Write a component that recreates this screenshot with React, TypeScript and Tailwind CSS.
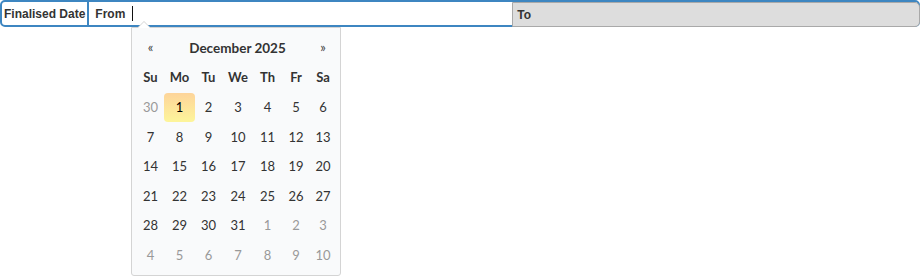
const weeks: { d: number; muted?: boolean; today?: boolean }[][] = [
  [{ d: 30, muted: true }, { d: 1, today: true }, { d: 2 }, { d: 3 }, { d: 4 }, { d: 5 }, { d: 6 }],
  [7, 8, 9, 10, 11, 12, 13].map((d) => ({ d })),
  [14, 15, 16, 17, 18, 19, 20].map((d) => ({ d })),
  [21, 22, 23, 24, 25, 26, 27].map((d) => ({ d })),
  [{ d: 28 }, { d: 29 }, { d: 30 }, { d: 31 }, { d: 1, muted: true }, { d: 2, muted: true }, { d: 3, muted: true }],
  [4, 5, 6, 7, 8, 9, 10].map((d) => ({ d, muted: true })),
];

const days = ["Su", "Mo", "Tu", "We", "Th", "Fr", "Sa"];
const cols = "grid grid-cols-[29px_29px_29px_30px_29px_28px_26px]";

function DatePicker() {
  return (
    <div className="absolute left-[131px] top-[27px] z-10 w-[210px] rounded-b-[3px] border border-[#d4d4d4] bg-[#f9fafb] px-1 pb-[5px] pt-[5px] font-['Lato',sans-serif] text-[13px] font-normal text-[#333]">
      {/* arrow */}
      <div className="absolute -top-[7px] left-[5px] h-0 w-0 border-x-[7px] border-b-[7px] border-x-transparent border-b-[#d4d4d4]" />
      <div className="absolute -top-[6px] left-[6px] h-0 w-0 border-x-[6px] border-b-[6px] border-x-transparent border-b-white" />
      <div className={`${cols} h-[30px] items-center text-center`}>
        <span className="text-[13px] text-[#444]">«</span>
        <span className="col-span-5 text-[13.5px] font-bold">December 2025</span>
        <span className="text-[13px] text-[#444]">»</span>
      </div>
      <div className={`${cols} h-[30px] items-center text-center font-bold`}>
        {days.map((d) => (
          <span key={d}>{d}</span>
        ))}
      </div>
      {weeks.map((w, i) => (
        <div key={i} className={`${cols} h-[29.5px] text-center`}>
          {w.map((c, j) => (
            <span
              key={j}
              className={
                c.today
                  ? "-mx-px flex h-[29px] items-center justify-center rounded-[4px] bg-gradient-to-b from-[#fdd49a] to-[#fdf59a] text-black"
                  : `flex items-center justify-center ${c.muted ? "text-[#999]" : ""}`
              }
            >
              {c.d}
            </span>
          ))}
        </div>
      ))}
    </div>
  );
}

export default function App() {
  return (
    <div className="relative h-[277px] w-[920px] bg-white font-['Liberation_Sans',Arial,sans-serif] text-[12px] font-bold text-[#333]">
      <div className="flex h-[27px] w-[920px] rounded-[5px] border-2 border-[#3d86c1]">
        <div className="flex items-center border-r-2 border-[#3d86c1] pl-[2px] pr-[2px]">Finalised Date</div>
        <div className="flex w-[423px] items-center">
          <span className="pl-[6px] pr-[6px]">From</span>
          <span className="ml-px h-[15px] w-px bg-[#111]" />
        </div>
        <div className="-mb-[2px] -mr-[2px] flex flex-1 items-center rounded-r-[5px] border border-[#a9a9a9] bg-[#dddddd] pl-[4px]">
          To
        </div>
      </div>
      <DatePicker />
    </div>
  );
}
